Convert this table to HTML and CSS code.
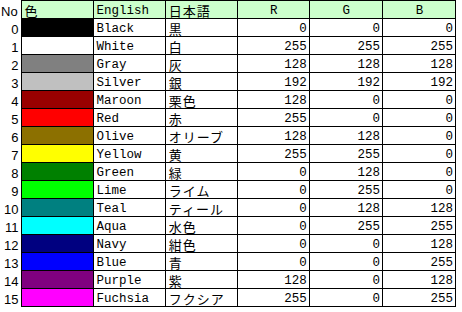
FILE: index.html
```html
<!DOCTYPE html>
<html lang="ja">
<head>
<meta charset="utf-8">
<link rel="stylesheet" href="styles.css">
</head>
<body>
<table class="sheet">
<colgroup>
<col class="c-no"><col class="c-w"><col class="c-w"><col class="c-w"><col class="c-w"><col class="c-w2"><col class="c-w2">
</colgroup>
<thead>
<tr><th class="no no-head">No</th><th class="hd jp">色</th><th class="hd">English</th><th class="hd jp">日本語</th><th class="hd ctr">R</th><th class="hd ctr">G</th><th class="hd ctr">B</th></tr>
</thead>
<tbody>
<tr><td class="no">0</td><td class="sw black"></td><td>Black</td><td class="jp">黒</td><td class="num">0</td><td class="num">0</td><td class="num">0</td></tr>
<tr><td class="no">1</td><td class="sw white"></td><td>White</td><td class="jp">白</td><td class="num">255</td><td class="num">255</td><td class="num">255</td></tr>
<tr><td class="no">2</td><td class="sw gray"></td><td>Gray</td><td class="jp">灰</td><td class="num">128</td><td class="num">128</td><td class="num">128</td></tr>
<tr><td class="no">3</td><td class="sw silver"></td><td>Silver</td><td class="jp">銀</td><td class="num">192</td><td class="num">192</td><td class="num">192</td></tr>
<tr><td class="no">4</td><td class="sw maroon"></td><td>Maroon</td><td class="jp">栗色</td><td class="num">128</td><td class="num">0</td><td class="num">0</td></tr>
<tr><td class="no">5</td><td class="sw red"></td><td>Red</td><td class="jp">赤</td><td class="num">255</td><td class="num">0</td><td class="num">0</td></tr>
<tr><td class="no">6</td><td class="sw olive"></td><td>Olive</td><td class="jp">オリーブ</td><td class="num">128</td><td class="num">128</td><td class="num">0</td></tr>
<tr><td class="no">7</td><td class="sw yellow"></td><td>Yellow</td><td class="jp">黄</td><td class="num">255</td><td class="num">255</td><td class="num">0</td></tr>
<tr><td class="no">8</td><td class="sw green"></td><td>Green</td><td class="jp">緑</td><td class="num">0</td><td class="num">128</td><td class="num">0</td></tr>
<tr><td class="no">9</td><td class="sw lime"></td><td>Lime</td><td class="jp">ライム</td><td class="num">0</td><td class="num">255</td><td class="num">0</td></tr>
<tr><td class="no">10</td><td class="sw teal"></td><td>Teal</td><td class="jp">ティール</td><td class="num">0</td><td class="num">128</td><td class="num">128</td></tr>
<tr><td class="no">11</td><td class="sw aqua"></td><td>Aqua</td><td class="jp">水色</td><td class="num">0</td><td class="num">255</td><td class="num">255</td></tr>
<tr><td class="no">12</td><td class="sw navy"></td><td>Navy</td><td class="jp">紺色</td><td class="num">0</td><td class="num">0</td><td class="num">128</td></tr>
<tr><td class="no">13</td><td class="sw blue"></td><td>Blue</td><td class="jp">青</td><td class="num">0</td><td class="num">0</td><td class="num">255</td></tr>
<tr><td class="no">14</td><td class="sw purple"></td><td>Purple</td><td class="jp">紫</td><td class="num">128</td><td class="num">0</td><td class="num">128</td></tr>
<tr><td class="no">15</td><td class="sw fuchsia"></td><td>Fuchsia</td><td class="jp">フクシア</td><td class="num">255</td><td class="num">0</td><td class="num">255</td></tr>
</tbody>
</table>
</body>
</html>
```
FILE: styles.css
```css
html, body {
  margin: 0;
  padding: 0;
  background: #ffffff;
}
.sheet {
  border-collapse: collapse;
  table-layout: fixed;
  width: 456px;
  font-family: "Liberation Mono", "Noto Sans CJK JP", monospace;
  font-size: 12.5px;
  color: #000;
}
.c-no { width: 21px; }
.c-w { width: 72px; }
.c-w2 { width: 73px; }
.sheet th, .sheet td {
  height: 17px;
  padding: 0 2px 0 3px;
  border: 1px solid #000;
  line-height: 14px;
  vertical-align: bottom;
  text-align: left;
  font-weight: normal;
  white-space: nowrap;
  overflow: hidden;
}
.sheet .no {
  border: none;
  border-right: 1px solid #000;
  text-align: right;
  padding: 0 2px 0 0;
  font-family: "Liberation Sans", "Noto Sans", sans-serif;
  font-size: 13px;
}
.sheet .no-head {
  text-align: left;
  padding-left: 1px;
}
.sheet .hd {
  background: #ccffcc;
}
.sheet .ctr {
  text-align: center;
}
.sheet .num {
  text-align: right;
}
.sheet .jp {
  font-family: "Noto Sans CJK JP", sans-serif;
  font-size: 13px;
  letter-spacing: 1px;
}
.black { background: #000000; }
.white { background: #ffffff; }
.gray { background: #808080; }
.silver { background: #c0c0c0; }
.maroon { background: #990000; }
.red { background: #ff0000; }
.olive { background: #8c7000; }
.yellow { background: #ffff00; }
.green { background: #008000; }
.lime { background: #00ff00; }
.teal { background: #008080; }
.aqua { background: #00ffff; }
.navy { background: #000080; }
.blue { background: #0000ff; }
.purple { background: #800080; }
.fuchsia { background: #ff00ff; }
```
